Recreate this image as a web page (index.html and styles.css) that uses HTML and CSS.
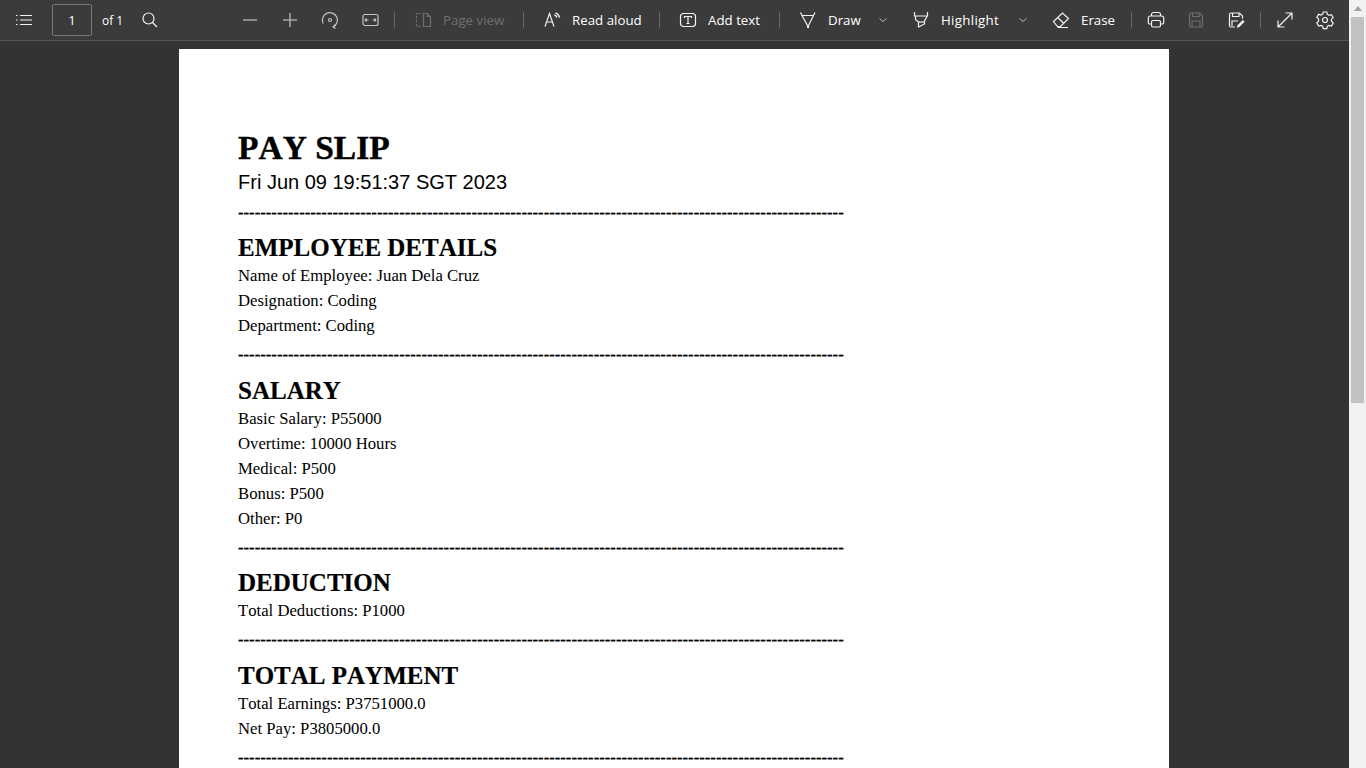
FILE: index.html
```html
<!DOCTYPE html>
<html lang="en">
<head>
    <meta charset="UTF-8">
    <title>Pay Slip</title>
    <link rel="stylesheet" href="styles.css">
</head>
<body>
    <div class="app">
        <div class="left">
            <div class="toolbar">
                <button class="icon-btn first"><svg viewBox="0 0 20 20"><path d="M6 5.500h12M6 10h12M6 14.500h12M2 5.500h1.500M2 10h1.500M2 14.500h1.500"/></svg></button>
                <div class="page-box">1</div>
                <span class="page-of">of 1</span>
                <button class="icon-btn"><svg viewBox="0 0 20 20"><circle cx="8.500" cy="8.500" r="5.500"/><path d="M12.500 12.500L17 17"/></svg></button>
                <div class="spacer"></div>
                <button class="icon-btn dim thick"><svg viewBox="0 0 20 20"><path d="M3 10h14"/></svg></button>
                <button class="icon-btn dim thick"><svg viewBox="0 0 20 20"><path d="M3 10h14M10 3v14"/></svg></button>
                <button class="icon-btn dim"><svg viewBox="0 0 20 20"><path d="M3.200 13.500A7.500 7.500 0 1 1 13 17"/><path d="M15.500 14.500L13 17l2.500 1.500"/><circle cx="10" cy="10" r="1.500"/></svg></button>
                <button class="icon-btn dim"><svg viewBox="0 0 20 20"><rect x="3" y="4.500" width="15" height="11" rx="2"/><path d="M5.500 10h3M12.500 10h3M6.500 8.500L5.200 10l1.300 1.500M14.500 8.500l1.300 1.500-1.300 1.500"/></svg></button>
                <div class="sep"></div>
                <button class="label-btn off"><svg viewBox="0 0 20 20"><path d="M5 3.500H3.500V16.500H8M8 3.500H6" stroke-dasharray="2.500 1.500"/><path d="M10.500 3.500h4l3 3v10h-7zM14.500 3.500v3h3"/></svg><span class="w-pageview">Page view</span></button>
                <div class="sep"></div>
                <button class="label-btn"><svg viewBox="0 0 20 20"><path d="M3 16.500L7.500 3.500 12 16.500M4.500 12h6"/><path class="wave" d="M12.500 5c1.200.4 2 1.300 2.400 2.500M13.500 2.800c2 .7 3.500 2.400 4 4.700"/></svg><span class="w-read">Read aloud</span></button>
                <div class="sep"></div>
                <button class="label-btn"><svg viewBox="0 0 20 20"><rect x="2.500" y="3.500" width="15" height="13" rx="3"/><path d="M6.500 8V6.500h7V8M10 6.500v7M8.500 13.500h3"/></svg><span class="w-add">Add text</span></button>
                <div class="sep"></div>
                <button class="label-btn no-right"><svg viewBox="0 0 20 20"><path d="M2.500 2.500L4 5.500H15.500L17 2.500M4 5.500L10 16.500 15.500 5.500M9.500 16v1.500h1V16"/></svg><span class="w-draw">Draw</span></button>
                <button class="chevron"><svg viewBox="0 0 10 10"><path d="M1.500 3.500L5 6.500 8.500 3.500"/></svg></button>
                <button class="label-btn no-right"><svg viewBox="0 0 20 20"><path d="M3.500 2v4h13V2M4.500 6v3.500l3 2.500v5l6-3v-3l3-5.500"/><path d="M7.500 12h6.500"/></svg><span class="w-highlight">Highlight</span></button>
                <button class="chevron"><svg viewBox="0 0 10 10"><path d="M1.500 3.500L5 6.500 8.500 3.500"/></svg></button>
                <button class="label-btn"><svg viewBox="0 0 20 20"><path d="M2.500 11.500L11.500 3l6 5.500-8 8H6.500zM6.500 7.500l6 5.500M6.500 17.500H17"/></svg><span class="w-draw">Erase</span></button>
                <div class="sep sep-wide"></div>
                <button class="icon-btn"><svg viewBox="0 0 20 20"><path d="M5.500 6V4.500a2 2 0 0 1 2-2h5a2 2 0 0 1 2 2V6M5 14H3.800a1.500 1.500 0 0 1-1.500-1.500V8a2 2 0 0 1 2-2h11.400a2 2 0 0 1 2 2v4.500a1.500 1.500 0 0 1-1.500 1.500H15"/><rect x="5.500" y="10.500" width="9" height="6.500" rx="1.500"/></svg></button>
                <button class="icon-btn off"><svg viewBox="0 0 20 20"><path d="M3.500 4.500a1.500 1.500 0 0 1 1.500-1.500h8.500l3 3v9.500a1.500 1.500 0 0 1-1.500 1.500H5a1.500 1.500 0 0 1-1.500-1.500z"/><path d="M6.500 3v3.500h6.500V3M6 17v-6h8v6"/></svg></button>
                <button class="icon-btn"><svg viewBox="0 0 20 20"><path d="M9 17H5a1.500 1.500 0 0 1-1.500-1.500V4.500A1.500 1.500 0 0 1 5 3h8.500l3 3v3"/><path d="M6.500 3v3.500h6.500V3M6 16v-5h6"/><path class="fill" d="M10 18.500l.8-3.500 6-6 2.700 2.700-6 6z"/></svg></button>
                <div class="sep sep-wide"></div>
                <button class="icon-btn"><svg viewBox="0 0 20 20"><path d="M3.500 16.500L16.500 3.500M10.500 3h6.500v6.500M3 10.500V17h6.500"/></svg></button>
                <button class="icon-btn"><svg viewBox="0 0 20 20"><path d="M8.200 2h3.600l.6 2.400 1.600.9 2.400-.7 1.800 3.100-1.800 1.700v1.800l1.800 1.700-1.800 3.100-2.400-.7-1.600.9-.6 2.400H8.200l-.6-2.400-1.600-.9-2.400.7-1.800-3.100 1.800-1.700V9.100L1.800 7.400l1.800-3.100 2.400.7 1.600-.9z"/><circle cx="10" cy="10" r="2.500"/></svg></button>
            </div>
            <div class="viewer">
                <div class="page">
                    <h1>PAY SLIP</h1>
                    <p class="date">Fri Jun 09 19:51:37 SGT 2023</p>
                    <p class="dash">-------------------------------------------------------------------------------------------------------------</p>
                    <h2 class="tight">EMPLOYEE DETAILS</h2>
                    <p>Name of Employee: Juan Dela Cruz</p>
                    <p>Designation: Coding</p>
                    <p>Department: Coding</p>
                    <p class="dash">-------------------------------------------------------------------------------------------------------------</p>
                    <h2>SALARY</h2>
                    <p>Basic Salary: P55000</p>
                    <p>Overtime: 10000 Hours</p>
                    <p>Medical: P500</p>
                    <p>Bonus: P500</p>
                    <p>Other: P0</p>
                    <p class="dash">-------------------------------------------------------------------------------------------------------------</p>
                    <h2 class="tight">DEDUCTION</h2>
                    <p>Total Deductions: P1000</p>
                    <p class="dash">-------------------------------------------------------------------------------------------------------------</p>
                    <h2>TOTAL PAYMENT</h2>
                    <p>Total Earnings: P3751000.0</p>
                    <p>Net Pay: P3805000.0</p>
                    <p class="dash">-------------------------------------------------------------------------------------------------------------</p>
                </div>
            </div>
        </div>
        <div class="scrollbar">
            <div class="arrow"></div>
            <div class="thumb"></div>
        </div>
    </div>
</body>
</html>
```

FILE: styles.css
```css
* {
    box-sizing: border-box;
}

html, body {
    height: 100%;
    margin: 0;
    overflow: hidden;
}

.app {
    display: flex;
    height: 768px;
}

.left {
    flex: 1;
    min-width: 0;
    display: flex;
    flex-direction: column;
}

.toolbar {
    height: 41px;
    flex: none;
    display: flex;
    align-items: center;
    background-color: #3b3b3b;
    border-bottom: 1px solid #555;
    font-family: "Open Sans", sans-serif;
    font-size: 13.3px;
    color: #fff;
}

button {
    display: flex;
    align-items: center;
    height: 40px;
    padding: 0;
    border: none;
    background: none;
    color: inherit;
    font: inherit;
}

svg {
    width: 20px;
    height: 20px;
    flex: none;
    fill: none;
    stroke: #f2f2f2;
    stroke-width: 1.2;
}

svg .fill {
    fill: #f2f2f2;
    stroke: #3b3b3b;
}

svg .wave {
    stroke-width: 1.4;
}

.icon-btn {
    width: 40px;
    justify-content: center;
}

.icon-btn.first {
    margin-left: 4px;
    margin-right: 8px;
}

.icon-btn.dim svg {
    stroke: #c4c4c4;
}

.icon-btn.thick svg {
    stroke: #a8a8a8;
    stroke-width: 1.5;
}

.off svg {
    stroke: #6e6e6e;
}

.off span {
    color: #6e6e6e;
}

.page-box {
    width: 40px;
    height: 32px;
    border: 1px solid #777;
    border-radius: 2px;
    text-align: center;
    line-height: 31px;
    font-size: 13px;
}

.page-of {
    width: 28px;
    margin-left: 10px;
    font-size: 12px;
}

.spacer {
    width: 60px;
}

.sep {
    width: 1px;
    height: 16px;
    margin: 0 3px 0 4px;
    background-color: #666;
}

.sep-wide {
    margin-right: 4px;
}

.label-btn {
    gap: 10px;
    padding: 0 14px 0 15px;
}

.label-btn.no-right {
    padding-right: 0;
}

.label-btn span {
    white-space: nowrap;
    text-align: left;
}

.w-pageview {
    width: 62px;
}

.w-read {
    width: 69px;
}

.w-add {
    width: 53px;
}

.w-draw {
    width: 32px;
}

.w-highlight {
    width: 59px;
    letter-spacing: 0.3px;
}

.chevron {
    width: 26px;
    justify-content: center;
    margin-left: 10px;
}

.chevron svg {
    width: 10px;
    height: 10px;
    stroke: #b4b4b4;
    stroke-width: 1;
}

.viewer {
    flex: 1;
    min-height: 0;
    overflow: hidden;
    background-color: #333;
    padding-top: 8px;
}

.page {
    width: 990px;
    height: 1400px;
    margin-left: 179px;
    padding: 76px 59px 0;
    background-color: #fff;
    color: #000;
    font-family: "Liberation Serif", serif;
    font-size: 16.7px;
    font-kerning: none;
    line-height: 25px;
}

h1 {
    margin: 1px 0;
    font-size: 33.5px;
    line-height: 44px;
    -webkit-text-stroke: 0.4px #000;
}

h2 {
    margin: 8px 0 0;
    font-size: 25px;
    line-height: 30px;
    -webkit-text-stroke: 0.2px #000;
}

h2.tight {
    margin-top: 7px;
}

p {
    margin: 0;
}

.date {
    margin-bottom: 6px;
    font-family: "Liberation Sans", sans-serif;
    font-size: 20px;
    line-height: 22px;
}

.dash {
    margin-top: 3px;
    font-weight: bold;
    line-height: 27px;
    white-space: nowrap;
    -webkit-text-stroke: 0.2px #000;
}

.scrollbar {
    width: 17px;
    flex: none;
    background-color: #f1f1f1;
    padding: 0 2px;
}

.arrow {
    width: 0;
    height: 0;
    margin: 6px auto 6px;
    border: 4px solid transparent;
    border-top: none;
    border-bottom: 5px solid #a3a3a3;
}

.thumb {
    height: 386px;
    background-color: #c1c1c1;
}
```
